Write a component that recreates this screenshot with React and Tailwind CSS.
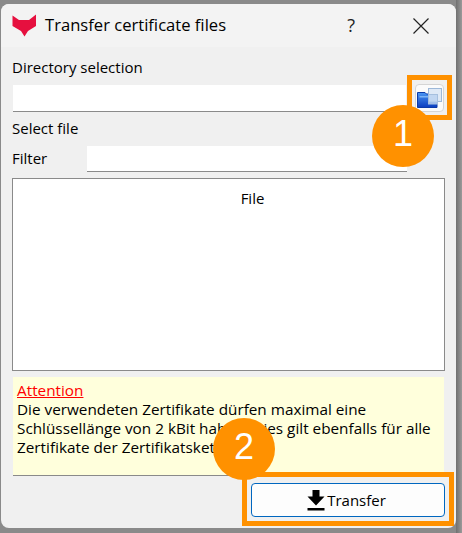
const ui = { fontFamily: '"Open Sans", "Noto Sans", sans-serif' };

function Logo() {
  return (
    <svg width="25" height="23" viewBox="0 0 25 23" className="shrink-0">
      <path d="M0.5 1.5 L7 6 H17 L24 0.5 L24 12 L16 17 L12.5 22.5 L9 17 L0.5 12 Z" fill="#e6103f" />
    </svg>
  );
}

function FolderIcon() {
  return (
    <svg width="25" height="20" viewBox="0 0 25 20">
      <defs>
        <linearGradient id="fg" x1="0" y1="0" x2="0" y2="1">
          <stop offset="0" stopColor="#4a96f2" />
          <stop offset="1" stopColor="#0a3cc0" />
        </linearGradient>
      </defs>
      <path d="M0.5 4.5 H8 L9.5 6 H20 V19.5 H0.5 Z" fill="url(#fg)" stroke="#0b3aa8" />
      <rect x="2.5" y="8" width="16" height="1.5" fill="#7db4f5" />
      <rect x="11.5" y="0.5" width="13" height="13" fill="#dfe9f6" stroke="#9db8d8" />
      <rect x="11.5" y="6.5" width="9" height="9.5" fill="#bcd2f0" fillOpacity="0.85" stroke="#a6bfde" />
    </svg>
  );
}

function DownloadIcon() {
  return (
    <svg width="18" height="21" viewBox="0 0 18 21" className="shrink-0">
      <path d="M5.5 0 H12.5 V6.5 H17.5 L9 15.5 L0.5 6.5 H5.5 Z" fill="#000" />
      <rect x="0.5" y="18" width="17" height="2.5" fill="#000" />
    </svg>
  );
}

function Badge({ n, className }) {
  return (
    <div className={"absolute w-[62px] h-[62px] pb-[4px] rounded-full bg-[#ff9100] text-white flex items-center justify-center text-[36px] leading-none " + className}
      style={{ fontFamily: '"Liberation Sans", Arial, sans-serif' }}>
      {n}
    </div>
  );
}

export default function App() {
  return (
    <div className="relative w-[462px] h-[533px] overflow-hidden bg-[#8a8a8a]" style={ui}>
      <div className="absolute right-0 top-0 bottom-0 w-[6px] bg-gradient-to-r from-[#707070] to-[#9a9a9a]" />
      <div className="relative ml-[1px] mt-[4px] w-[455px] h-[524px] bg-[#f0f0f0] rounded-[8px] overflow-hidden flex flex-col text-[15px] text-black">
        <div className="h-[43px] bg-[#f3f3f3] flex items-center pl-[11px] shrink-0">
          <Logo />
          <span className="ml-[8px] text-[16.6px] leading-none -mt-[1px]">Transfer certificate files</span>
          <span className="ml-auto mr-[58px] text-[18px] leading-none text-[#222] -mt-[1px]">?</span>
          <svg width="16" height="16" viewBox="0 0 16 16" className="mr-[27px]">
            <path d="M0.5 0.5 L15.5 15.5 M15.5 0.5 L0.5 15.5" stroke="#222" strokeWidth="1.2" fill="none" />
          </svg>
        </div>
        <div className="flex flex-col px-[11px] flex-1">
          <div className="h-[20px] leading-[20px] mt-[10px]">Directory selection</div>
          <div className="flex items-center gap-[9px] mt-[7px] h-[28px] pl-[1px]">
            <div className="w-[393px] h-[27px] bg-white border-b border-[#8a8a8a]" />
            <div className="w-[29px] h-[28px] bg-[#fbfbfb] border border-[#d5d5d5] rounded-[4px] flex items-center justify-center">
              <FolderIcon />
            </div>
          </div>
          <div className="h-[20px] leading-[20px] mt-[6px]">Select file</div>
          <div className="flex items-center mt-[8px] h-[26px]">
            <span className="w-[75px] leading-[20px] -mt-[2px]">Filter</span>
            <div className="w-[320px] h-[26px] bg-white border-b border-[#8a8a8a]" />
          </div>
          <div className="mt-[6px] w-[433px] h-[193px] bg-white border border-[#8a8a8a] flex justify-center">
            <span className="mt-[9px] ml-[48px] leading-[20px]">File</span>
          </div>
          <div className="mt-[6px] ml-[1px] w-[431px] h-[99px] bg-[#ffffdc] border-b border-[#8a8a8a] px-[4px] pt-[4px] text-[15.3px] leading-[19px]" >
            <div className="text-[#ff0000] underline">Attention</div>
            <div className="whitespace-nowrap">Die verwendeten Zertifikate dürfen maximal eine<br />Schlüssellänge von 2 kBit haben. Dies gilt ebenfalls für alle<br />Zertifikate der Zertifikatskette.</div>
          </div>
          <div className="mt-[7px] ml-[239px] w-[194px] h-[34px] bg-[#fdfdfd] border border-[#0067c0] rounded-[4px] flex items-center justify-center">
            <div className="-ml-[3px] flex items-center">
              <DownloadIcon />
              <span className="ml-[2px] leading-[20px]">Transfer</span>
            </div>
          </div>
        </div>
      </div>
      <div className="absolute left-[407px] top-[75px] w-[45px] h-[45px] border-[5px] border-[#ff9100]" />
      <div className="absolute left-[242px] top-[472px] w-[212px] h-[54px] border-[5px] border-[#ff9100]" />
      <Badge n="1" className="left-[372px] top-[105px]" />
      <Badge n="2" className="left-[213px] top-[418px]" />
    </div>
  );
}
